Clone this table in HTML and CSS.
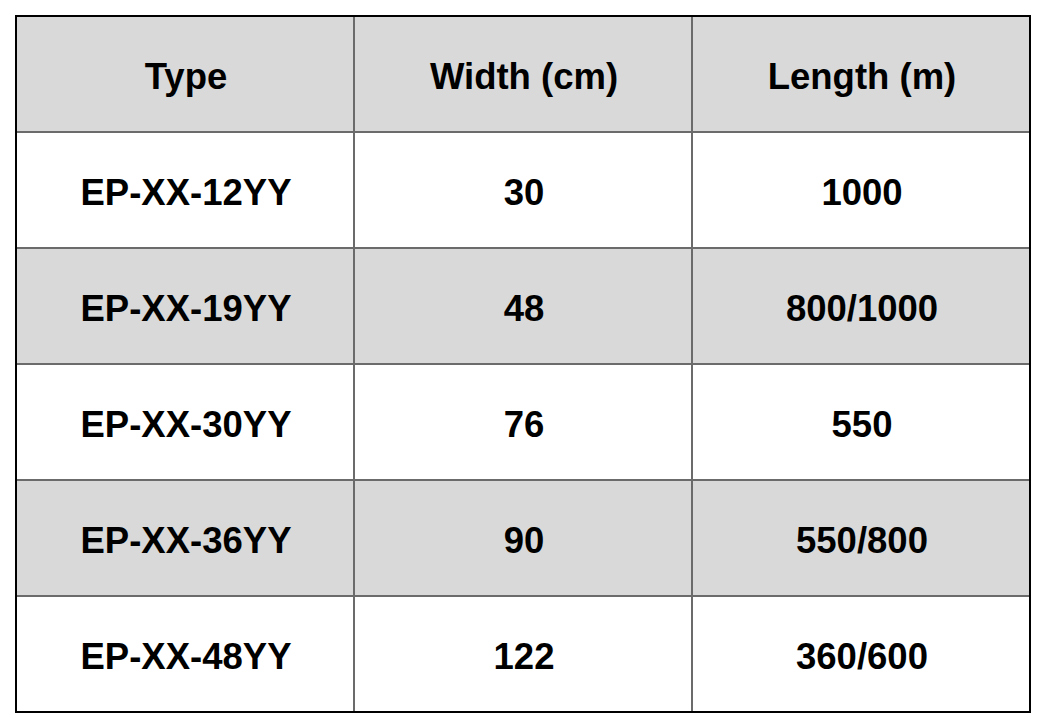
FILE: index.html
```html
<!DOCTYPE html>
<html>
<head>
<meta charset="utf-8">
<title>Types</title>
<link rel="stylesheet" href="styles.css">
</head>
<body>
<div class="table">
  <div class="cell shade">Type</div>
  <div class="cell shade">Width (cm)</div>
  <div class="cell shade">Length (m)</div>

  <div class="cell">EP-XX-12YY</div>
  <div class="cell">30</div>
  <div class="cell">1000</div>

  <div class="cell shade">EP-XX-19YY</div>
  <div class="cell shade">48</div>
  <div class="cell shade">800/1000</div>

  <div class="cell">EP-XX-30YY</div>
  <div class="cell">76</div>
  <div class="cell">550</div>

  <div class="cell shade">EP-XX-36YY</div>
  <div class="cell shade">90</div>
  <div class="cell shade">550/800</div>

  <div class="cell">EP-XX-48YY</div>
  <div class="cell">122</div>
  <div class="cell">360/600</div>
</div>
</body>
</html>
```
FILE: styles.css
```css
html, body {
  margin: 0;
  padding: 0;
  background: #ffffff;
}
body {
  padding: 15px;
  font-family: "Liberation Sans", Arial, sans-serif;
}
.table {
  display: grid;
  grid-template-columns: repeat(3, 336px);
  grid-template-rows: repeat(6, 114px);
  gap: 2px;
  width: 1012px;
  background: #6b6b6b;
  border: 2px solid #000000;
}
.cell {
  background: #ffffff;
  display: flex;
  align-items: center;
  justify-content: center;
  padding: 5px 0 0 2px;
  font-weight: bold;
  font-size: 36.5px;
  color: #000000;
}
.cell.shade {
  background: #d9d9d9;
}
```
